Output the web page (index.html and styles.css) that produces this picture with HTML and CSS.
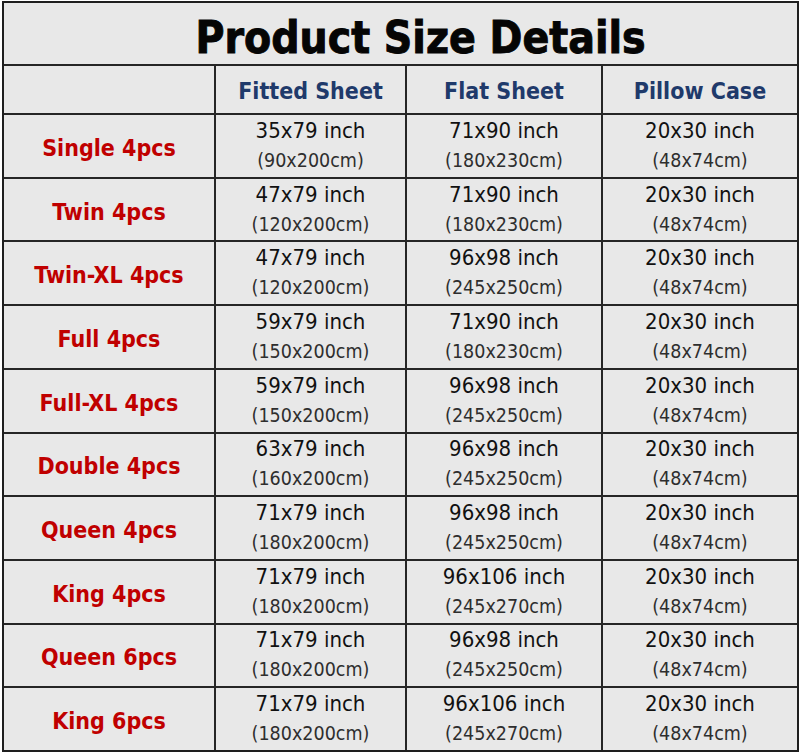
FILE: index.html
```html
<!DOCTYPE html>
<html>
<head>
<meta charset="utf-8">
<link rel="stylesheet" href="styles.css">
</head>
<body>
<div class="sheet">
  <div class="title">Product Size Details</div>
  <div class="cell head-empty"></div>
  <div class="cell head">Fitted Sheet</div>
  <div class="cell head">Flat Sheet</div>
  <div class="cell head">Pillow Case</div>

  <div class="cell label">Single 4pcs</div>
  <div class="cell size"><span class="in">35x79 inch</span><span class="cm">(90x200cm)</span></div>
  <div class="cell size"><span class="in">71x90 inch</span><span class="cm">(180x230cm)</span></div>
  <div class="cell size"><span class="in">20x30 inch</span><span class="cm">(48x74cm)</span></div>

  <div class="cell label">Twin 4pcs</div>
  <div class="cell size"><span class="in">47x79 inch</span><span class="cm">(120x200cm)</span></div>
  <div class="cell size"><span class="in">71x90 inch</span><span class="cm">(180x230cm)</span></div>
  <div class="cell size"><span class="in">20x30 inch</span><span class="cm">(48x74cm)</span></div>

  <div class="cell label">Twin-XL 4pcs</div>
  <div class="cell size"><span class="in">47x79 inch</span><span class="cm">(120x200cm)</span></div>
  <div class="cell size"><span class="in">96x98 inch</span><span class="cm">(245x250cm)</span></div>
  <div class="cell size"><span class="in">20x30 inch</span><span class="cm">(48x74cm)</span></div>

  <div class="cell label">Full 4pcs</div>
  <div class="cell size"><span class="in">59x79 inch</span><span class="cm">(150x200cm)</span></div>
  <div class="cell size"><span class="in">71x90 inch</span><span class="cm">(180x230cm)</span></div>
  <div class="cell size"><span class="in">20x30 inch</span><span class="cm">(48x74cm)</span></div>

  <div class="cell label">Full-XL 4pcs</div>
  <div class="cell size"><span class="in">59x79 inch</span><span class="cm">(150x200cm)</span></div>
  <div class="cell size"><span class="in">96x98 inch</span><span class="cm">(245x250cm)</span></div>
  <div class="cell size"><span class="in">20x30 inch</span><span class="cm">(48x74cm)</span></div>

  <div class="cell label">Double 4pcs</div>
  <div class="cell size"><span class="in">63x79 inch</span><span class="cm">(160x200cm)</span></div>
  <div class="cell size"><span class="in">96x98 inch</span><span class="cm">(245x250cm)</span></div>
  <div class="cell size"><span class="in">20x30 inch</span><span class="cm">(48x74cm)</span></div>

  <div class="cell label">Queen 4pcs</div>
  <div class="cell size"><span class="in">71x79 inch</span><span class="cm">(180x200cm)</span></div>
  <div class="cell size"><span class="in">96x98 inch</span><span class="cm">(245x250cm)</span></div>
  <div class="cell size"><span class="in">20x30 inch</span><span class="cm">(48x74cm)</span></div>

  <div class="cell label">King 4pcs</div>
  <div class="cell size"><span class="in">71x79 inch</span><span class="cm">(180x200cm)</span></div>
  <div class="cell size"><span class="in">96x106 inch</span><span class="cm">(245x270cm)</span></div>
  <div class="cell size"><span class="in">20x30 inch</span><span class="cm">(48x74cm)</span></div>

  <div class="cell label">Queen 6pcs</div>
  <div class="cell size"><span class="in">71x79 inch</span><span class="cm">(180x200cm)</span></div>
  <div class="cell size"><span class="in">96x98 inch</span><span class="cm">(245x250cm)</span></div>
  <div class="cell size"><span class="in">20x30 inch</span><span class="cm">(48x74cm)</span></div>

  <div class="cell label">King 6pcs</div>
  <div class="cell size"><span class="in">71x79 inch</span><span class="cm">(180x200cm)</span></div>
  <div class="cell size"><span class="in">96x106 inch</span><span class="cm">(245x270cm)</span></div>
  <div class="cell size"><span class="in">20x30 inch</span><span class="cm">(48x74cm)</span></div>
</div>
</body>
</html>
```
FILE: styles.css
```css
html, body {
  margin: 0;
  padding: 0;
  background: #ffffff;
}
body {
  padding: 1px 0 0 2px;
  font-family: "DejaVu Sans Condensed", "DejaVu Sans", sans-serif;
  font-stretch: condensed;
}
.sheet {
  box-sizing: border-box;
  width: 797px;
  height: 751px;
  border: 2px solid #1e1e1e;
  background: #262626;
  display: grid;
  grid-template-columns: 210px 189px 194px 194px;
  grid-template-rows: 61px 47px repeat(10, minmax(0, 1fr));
  gap: 2px;
}
.title {
  grid-column: 1 / 5;
  background: #e8e8e8;
  display: flex;
  align-items: center;
  justify-content: center;
  font-size: 44px;
  font-weight: bold;
  color: #050505;
  -webkit-text-stroke: 0.9px #050505;
  padding-left: 40px;
  padding-top: 8px;
}
.cell {
  background: #e8e8e8;
  display: flex;
  align-items: center;
  justify-content: center;
  min-height: 0;
}
.head {
  color: #1f3a6b;
  font-weight: bold;
  font-size: 23px;
  padding-top: 2px;
}
.label {
  color: #c00000;
  font-weight: bold;
  font-size: 23px;
  padding-top: 4px;
}
.size {
  flex-direction: column;
  gap: 3px;
  padding-top: 1px;
}
.in {
  font-size: 22px;
  color: #111111;
  line-height: 26px;
}
.cm {
  font-size: 19.5px;
  color: #2e2e2e;
  line-height: 28px;
}
```
